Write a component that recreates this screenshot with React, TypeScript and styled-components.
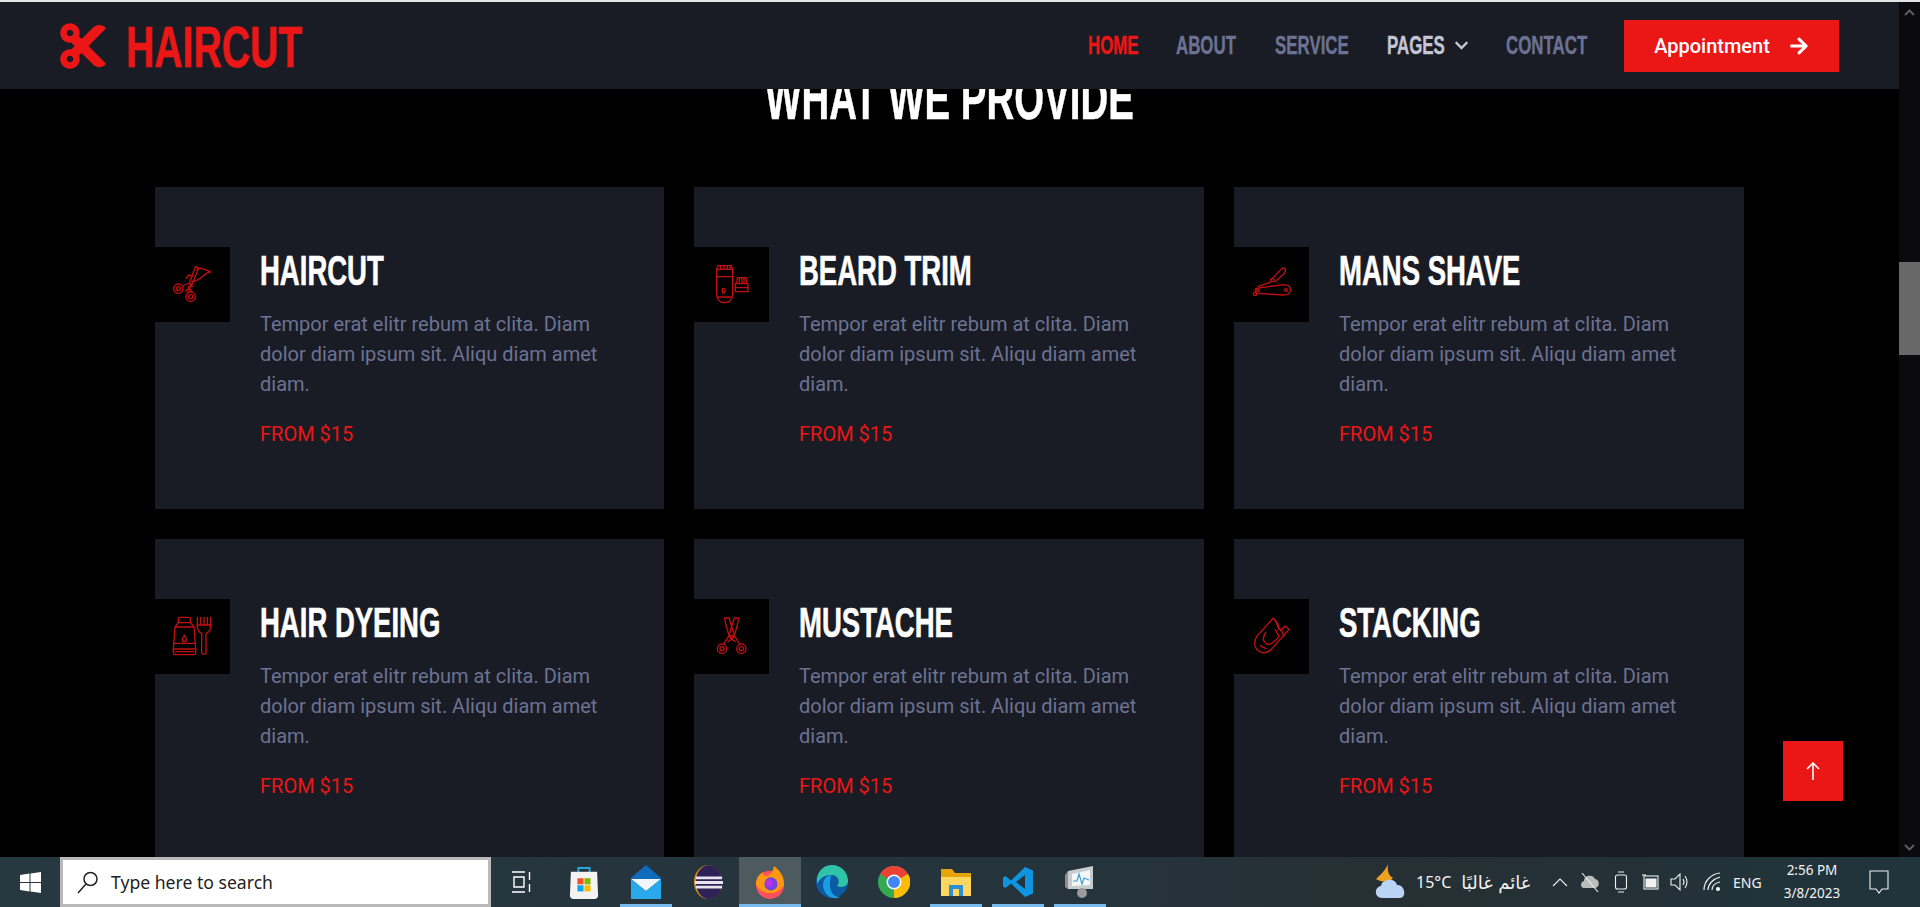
import React from "react";
import styled, { createGlobalStyle } from "styled-components";
import { FaCut, FaArrowRight, FaChevronDown } from "react-icons/fa";

const GlobalStyle = createGlobalStyle`
  html, body { margin: 0; padding: 0; background: #000; overflow: hidden; }
  * { box-sizing: border-box; }
`;

// no condensed family is installed, so the heading face is squeezed with scaleX
const head = `"Liberation Sans", Arimo, sans-serif`;
const primary = "#EB1616";
const dark = "#191C24";
const muted = "#6C7293";

const Page = styled.div`
  width: 1920px;
  height: 907px;
  display: flex;
  flex-direction: column;
  overflow: hidden;
  border-top: 2px solid #e3e3e3;
  background: #000;
`;
const Middle = styled.div`
  flex: 1;
  min-height: 0;
  display: flex;
  position: relative;
`;
const Site = styled.div`
  flex: 1;
  min-width: 0;
  display: flex;
  flex-direction: column;
  overflow: hidden;
`;
const Navbar = styled.nav`
  flex: none;
  height: 87px;
  background: ${dark};
  display: flex;
  align-items: center;
  padding: 0 60px 0 57px;
  position: relative;
  z-index: 2;
`;
const Brand = styled.div`
  width: 260px;
  display: flex;
  align-items: center;
  gap: 17px;
  color: ${primary};
`;
const BrandName = styled.span`
  display: inline-block;
  width: 176px;
  margin-top: 3px;
  font: 700 58px/1 ${head};
  white-space: nowrap;
  transform: scaleX(0.675);
  transform-origin: left center;
  -webkit-text-stroke: 0.6px ${primary};
`;
const NavLinks = styled.div`
  margin-left: auto;
  display: flex;
  align-items: center;
`;
const NavLink = styled.a<{ $color: string; $w: number }>`
  width: ${(p) => p.$w}px;
  color: ${(p) => p.$color};
  display: flex;
  align-items: center;
  gap: 11px;
`;
const NavLabel = styled.span<{ $w?: number }>`
  display: inline-block;
  ${(p) => (p.$w ? `width: ${p.$w}px;` : "")}
  font: 700 25px/1 ${head};
  white-space: nowrap;
  transform: scaleX(0.675);
  transform-origin: left center;
  -webkit-text-stroke: 0.4px currentColor;
`;
const Appointment = styled.button`
  width: 215px;
  height: 52px;
  margin-left: 2px;
  border: 0;
  background: ${primary};
  color: #fff;
  font: 500 20px "Roboto", sans-serif;
  display: flex;
  align-items: center;
  justify-content: center;
  gap: 19px;
`;
const Content = styled.main`
  flex: 1;
  min-height: 0;
  overflow: hidden;
`;
const Heading = styled.h1`
  margin: -21px 0 0;
  height: 119px;
  text-align: center;
  color: #fff;
  font: 700 61px/60px ${head};
  white-space: nowrap;
  transform: scaleX(0.63);
  -webkit-text-stroke: 0.5px #fff;
`;
const Grid = styled.div`
  margin-left: 155px;
  display: grid;
  grid-template-columns: 509px 510px 510px;
  gap: 30px;
`;
const Card = styled.article`
  height: 322px;
  background: ${dark};
  padding-top: 60px;
  display: flex;
  gap: 30px;
`;
const IconBox = styled.div`
  flex: none;
  width: 75px;
  height: 75px;
  background: #000;
`;
const CardBody = styled.div`
  flex: 1;
  padding-right: 45px;
`;
const CardTitle = styled.h3`
  margin: 0 0 15px;
  color: #fff;
  font: 700 42px/47px ${head};
  white-space: nowrap;
  transform: scaleX(0.655);
  transform-origin: left center;
  -webkit-text-stroke: 0.6px #fff;
`;
const CardText = styled.p`
  margin: 0 0 20px;
  color: ${muted};
  font: 400 20px/30px "Roboto", sans-serif;
`;
const Price = styled.div`
  color: ${primary};
  font: 400 20px/30px "Roboto", sans-serif;
`;
const Scrollbar = styled.div`
  flex: none;
  width: 21px;
  background: #0b0b0d;
  display: flex;
  flex-direction: column;
  align-items: center;
  justify-content: space-between;
  position: relative;
  color: #5c5c5c;
`;
const ScrollArrow = styled.div`
  height: 20px;
  display: flex;
  align-items: center;
  justify-content: center;
`;
const Thumb = styled.div`
  position: absolute;
  top: 260px;
  left: 0;
  width: 21px;
  height: 93px;
  background: #686868;
`;
const BackTop = styled.button`
  position: absolute;
  right: 77px;
  bottom: 56px;
  width: 60px;
  height: 60px;
  border: 0;
  padding: 0;
  background: ${primary};
  display: flex;
  align-items: center;
  justify-content: center;
  z-index: 3;
`;
const Taskbar = styled.footer`
  flex: none;
  height: 50px;
  background: linear-gradient(90deg, #273840 0%, #25333b 60%, #262f33 72%, #20343c 100%);
  display: flex;
  align-items: stretch;
  color: #fff;
  font-family: "Noto Sans", sans-serif;
`;
const StartCell = styled.div`
  width: 60px;
  display: flex;
  align-items: center;
  justify-content: center;
`;
const SearchBox = styled.div`
  width: 431px;
  border: 3px solid #b9b9b9;
  background: #fff;
  color: #222;
  display: flex;
  align-items: center;
  gap: 11px;
  padding-left: 13px;
  font-size: 17.6px;
`;
const TaskCell = styled.div<{ $active?: boolean; $open?: boolean }>`
  width: 62px;
  display: flex;
  align-items: center;
  justify-content: center;
  position: relative;
  background: ${(p) => (p.$active ? "#4d5a60" : "transparent")};
  &::after {
    content: "";
    display: ${(p) => (p.$active || p.$open ? "block" : "none")};
    position: absolute;
    bottom: 0;
    height: 3px;
    left: ${(p) => (p.$active ? 0 : 5)}px;
    right: ${(p) => (p.$active ? 0 : 5)}px;
    background: #76b9ed;
  }
`;
const Tray = styled.div`
  margin-left: auto;
  padding-right: 31px;
  display: flex;
  align-items: center;
`;
const TrayItem = styled.div<{ $w: number }>`
  width: ${(p) => p.$w}px;
  display: flex;
  align-items: center;
  font-size: 14px;
  color: #f2f2f2;
`;
const Weather = styled.div`
  width: 136px;
  display: flex;
  align-items: center;
  gap: 10px;
  font-size: 16px;
  color: #f2f2f2;
`;
const Arabic = styled.span`
  font: 400 18px "DejaVu Sans", sans-serif;
  white-space: nowrap;
`;
const Clock = styled.div`
  width: 87px;
  display: flex;
  flex-direction: column;
  padding-right: 27px;
  align-items: center;
  gap: 6px;
  font-size: 13.5px;
  line-height: 17px;
  color: #f2f2f2;
`;

// drawn on a 225 box so the strokes can be read off the crops
const Line = ({ children }: { children: React.ReactNode }) => (
  <svg width="75" height="75" viewBox="0 0 225 225" fill="none" stroke="#c40f0f" strokeWidth="4" strokeLinejoin="round" strokeLinecap="round">
    {children}
  </svg>
);

const ShearsIcon = () => (
  <Line>
    <circle cx="70" cy="125" r="14" /><circle cx="70" cy="125" r="6" />
    <circle cx="107" cy="149" r="14" /><circle cx="107" cy="149" r="6" />
    <path d="M83 117 L103 108 L122 58 L131 64 L110 114 L92 133" />
    <path d="M112 136 L100 118 M100 137 L107 112 L116 100" />
    <path d="M126 68 C135 58 150 68 167 75 C150 74 145 95 118 103" />
    <path d="M93 94 L101 84 L114 88 M104 112 L112 118" />
  </Line>
);
const BeardIcon = () => (
  <Line>
    <path d="M68 67 H116 V140 C116 155 108 167 91 167 C76 167 68 155 68 140 Z" />
    <path d="M68 89 H116 M73 150 H111 M68 67 L72 56 H112 L116 67 M80 57 V66 M90 57 V66 M100 57 V66 M108 57 V66" />
    <rect x="85" y="124" width="8" height="14" rx="3" />
    <path d="M124 110 H162 V134 H124 Z M124 122 H162 M128 110 L130 92 H156 L158 110 M136 93 V108 M144 93 V108 M150 93 V108" />
  </Line>
);
const ShaveIcon = () => (
  <Line>
    <path d="M113 97 L143 65 Q150 59 154 67 Q156 74 148 82 L123 104" />
    <circle cx="115" cy="99" r="5" />
    <path d="M66 124 L148 113 Q170 113 170 129 Q168 144 148 144 L70 139 Q60 134 66 124 Z" />
    <circle cx="72" cy="130" r="4" /><circle cx="156" cy="129" r="4" /><circle cx="63" cy="141" r="5" />
    <path d="M72 119 L113 104" />
  </Line>
);
const DyeIcon = () => (
  <Line>
    <path d="M70 71 V60 Q70 55 76 55 H100 Q106 55 106 60 V71 Z" />
    <path d="M70 71 L60 84 L55 150 H122 L117 84 L106 71 M60 84 H117 M58 133 H120" />
    <path d="M88 108 C84 114 82 118 82 122 A6 6 0 0 0 94 122 C94 118 92 114 88 108 Z" />
    <path d="M55 150 V160 Q55 167 62 167 H116 Q122 167 122 160 V150 M62 158 H116" />
    <path d="M127 55 V85 Q130 100 140 103 V160 Q140 166 147 166 Q153 166 153 160 V103 Q167 97 167 85 V55" />
    <path d="M137 55 V78 M147 55 V78 M157 55 V78 M127 78 H167" />
  </Line>
);
const ScissorsIcon = () => (
  <Line>
    <circle cx="84" cy="149" r="14" /><circle cx="84" cy="149" r="6" />
    <circle cx="142" cy="149" r="14" /><circle cx="142" cy="149" r="6" />
    <path d="M92 57 L105 57 L122 112 L137 135 M92 57 C94 78 102 100 108 116 L124 128" />
    <path d="M134 57 L121 57 L104 112 L89 135 M134 57 C132 78 124 100 118 116 L102 128" />
    <circle cx="113" cy="113" r="4" />
  </Line>
);
const ClipIcon = () => (
  <Line>
    <path d="M118 57 L68 112 Q54 140 73 155 Q93 170 112 151 L165 91 L153 81 L140 95 L131 75 L118 57 Z" />
    <path d="M95 100 Q80 125 98 135 Q114 140 135 112 L124 92" />
    <path d="M125 64 L134 92 M142 93 L150 112 M80 140 L88 145 M90 146 L96 149" />
  </Line>
);

const services = [
  { title: "HAIRCUT", icon: <ShearsIcon /> },
  { title: "BEARD TRIM", icon: <BeardIcon /> },
  { title: "MANS SHAVE", icon: <ShaveIcon /> },
  { title: "HAIR DYEING", icon: <DyeIcon /> },
  { title: "MUSTACHE", icon: <ScissorsIcon /> },
  { title: "STACKING", icon: <ClipIcon /> },
];

const WinLogo = () => (
  <svg width="21" height="21" viewBox="0 0 21 21" fill="#fff">
    <path d="M0 3 L9.5 1.6 V10 H0 Z M10.5 1.4 L21 0 V10 H10.5 Z M0 11 H9.5 V19.4 L0 18 Z M10.5 11 H21 V21 L10.5 19.6 Z" />
  </svg>
);
const SearchGlyph = () => (
  <svg width="24" height="24" viewBox="0 0 24 24" fill="none" stroke="#222" strokeWidth="1.5">
    <circle cx="14.5" cy="9" r="6.5" /><path d="M10 14 L2 23" />
  </svg>
);
const TaskView = () => (
  <svg width="22" height="22" viewBox="0 0 22 22" fill="none" stroke="#fff" strokeWidth="1.4">
    <path d="M1 1 H14 M1 21 H14 M3 6 H13 V16 H3 Z M18.5 1 V9 M18.5 13 V21" />
  </svg>
);
const StoreIcon = () => (
  <svg width="30" height="36" viewBox="0 0 32 36">
    <path d="M10 8 V3 H22 V8" fill="none" stroke="#29a8e0" strokeWidth="2" />
    <path d="M2 7 H30 L31 32 Q31 36 27 36 H5 Q1 36 1 32 Z" fill="#f3f3f3" />
    <rect x="9" y="14" width="6.5" height="6.5" fill="#f25022" /><rect x="16.5" y="14" width="6.5" height="6.5" fill="#7fba00" />
    <rect x="9" y="21.5" width="6.5" height="6.5" fill="#00a4ef" /><rect x="16.5" y="21.5" width="6.5" height="6.5" fill="#ffb900" />
  </svg>
);
const MailIcon = () => (
  <svg width="32" height="36" viewBox="0 0 32 36">
    <path d="M1 14 L16 1 L31 14 V34 H1 Z" fill="#0f6cbd" />
    <path d="M1 15 H31 L16 27 Z" fill="#f2f6fa" />
    <path d="M1 15 L16 27 L31 15 V35 H1 Z" fill="#29a9ec" />
  </svg>
);
const EclipseIcon = () => (
  <svg width="30" height="36" viewBox="0 0 32 36">
    <ellipse cx="16" cy="18" rx="15" ry="18" fill="#d98a1e" />
    <ellipse cx="17" cy="18" rx="14" ry="18" fill="#2c2255" />
    <path d="M3 12 H31 V15 H3 Z M2 17 H32 V20 H2 Z M3 22 H31 V25 H3 Z" fill="#e6e4ee" />
  </svg>
);
const FirefoxIcon = () => (
  <svg width="30" height="36" viewBox="0 0 32 36">
    <circle cx="16" cy="21" r="15" fill="#ff4f5e" />
    <path d="M1 21 C1 12 6 9 9 7 C8 11 10 12 13 11 C17 10 20 6 20 1 C27 6 31 12 31 21 C28 27 22 30 16 30 C8 30 4 26 1 21 Z" fill="#ff980e" />
    <circle cx="17" cy="20" r="7" fill="#7542e5" />
    <circle cx="15" cy="19" r="4" fill="#b833e1" />
  </svg>
);
const EdgeIcon = () => (
  <svg width="32" height="36" viewBox="0 0 32 36">
    <circle cx="16" cy="18" r="16" fill="#0c59a4" />
    <path d="M1 14 C3 5 9 1 16 1 C25 1 32 8 32 17 C32 23 25 24 21 22 C25 17 22 11 15 11 C9 11 4 14 1 20 Z" fill="#2fc4a7" />
    <path d="M15 11 C7 12 5 22 9 28 C12 33 18 36 24 33 C16 33 12 26 15 11 Z" fill="#1b9de2" />
  </svg>
);
const ChromeIcon = () => (
  <svg width="32" height="32" viewBox="0 0 32 32">
    <circle cx="16" cy="16" r="16" fill="#34a853" />
    <path d="M16 0 A16 16 0 0 1 30 8 L16 16 L2.2 8 A16 16 0 0 1 16 0 Z" fill="#ea4335" />
    <path d="M30 8 A16 16 0 0 1 16 32 L16 16 Z" fill="#fbbc05" />
    <circle cx="16" cy="16" r="7.5" fill="#fff" /><circle cx="16" cy="16" r="6" fill="#4285f4" />
  </svg>
);
const FolderIcon = () => (
  <svg width="32" height="30" viewBox="0 0 32 30">
    <path d="M1 2 H12 L15 6 H31 V28 H1 Z" fill="#e5a50a" />
    <path d="M1 10 H31 V29 H1 Z" fill="#ffd75e" />
    <path d="M9 18 H23 V29 H19 V22 H13 V29 H9 Z" fill="#2b8fd6" />
  </svg>
);
const VsCodeIcon = () => (
  <svg width="32" height="32" viewBox="0 0 32 32">
    <path d="M23 1 L31 4.5 V27.5 L23 31 L9 17.5 L3.5 22 L1 20.5 V11.5 L3.5 10 L9 14.5 Z M23 9 L14 16 L23 23 Z" fill="#0f95e0" fillRule="evenodd" />
  </svg>
);
const MonitorIcon = () => (
  <svg width="30" height="34" viewBox="0 0 30 34">
    <path d="M3 6 L28 1 V24 L3 24 Z" fill="#c9cccf" />
    <path d="M7 9 L25 5 V20 L7 21 Z" fill="#f4f6f7" />
    <path d="M8 16 L12 16 L14 9 L17 19 L19 13 L24 15" fill="none" stroke="#39a0d8" strokeWidth="1.2" />
    <circle cx="17" cy="28" r="5" fill="#9a9a9a" />
    <path d="M0 10 L3 6 V24 L0 22 Z" fill="#8f8f8f" />
  </svg>
);
const WeatherIcon = () => (
  <svg width="32" height="36" viewBox="0 0 32 36">
    <path d="M13 0 C10 7 6 10 1 15 C8 19 15 18 18 14 C14 12 12 7 13 0 Z" fill="#eda31f" />
    <path d="M7 34 C-1 34 -1 23 6 22 C7 15 20 13 22 21 C30 20 32 34 25 34 Z" fill="#b9d4f5" />
  </svg>
);
const TrayGlyph = ({ w, h = 22, children }: { w: number; h?: number; children: React.ReactNode }) => (
  <svg width={w} height={h} viewBox={`0 0 ${w} ${h}`} fill="none" stroke="#f0f0f0" strokeWidth="1.1">
    {children}
  </svg>
);

export default function App() {
  return (
    <Page>
      <GlobalStyle />
      <Middle>
        <Site>
          <Navbar>
            <Brand>
              <FaCut size={52} />
              <BrandName>HAIRCUT</BrandName>
            </Brand>
            <NavLinks>
              <NavLink $color={primary} $w={88}><NavLabel>HOME</NavLabel></NavLink>
              <NavLink $color={muted} $w={99}><NavLabel>ABOUT</NavLabel></NavLink>
              <NavLink $color={muted} $w={112}><NavLabel>SERVICE</NavLabel></NavLink>
              <NavLink $color="#c3c5d2" $w={119}><NavLabel $w={56}>PAGES</NavLabel><FaChevronDown size={15} /></NavLink>
              <NavLink $color={muted} $w={116}><NavLabel>CONTACT</NavLabel></NavLink>
              <Appointment>
                Appointment
                <FaArrowRight size={20} />
              </Appointment>
            </NavLinks>
          </Navbar>
          <Content>
            <Heading>WHAT WE PROVIDE</Heading>
            <Grid>
              {services.map((s) => (
                <Card key={s.title}>
                  <IconBox>{s.icon}</IconBox>
                  <CardBody>
                    <CardTitle>{s.title}</CardTitle>
                    <CardText>Tempor erat elitr rebum at clita. Diam dolor diam ipsum sit. Aliqu diam amet diam.</CardText>
                    <Price>FROM $15</Price>
                  </CardBody>
                </Card>
              ))}
            </Grid>
          </Content>
        </Site>
        <Scrollbar>
          <ScrollArrow>
            <svg width="11" height="7" viewBox="0 0 11 7" fill="none" stroke="currentColor" strokeWidth="2"><path d="M1 6 L5.5 1.5 L10 6" /></svg>
          </ScrollArrow>
          <Thumb />
          <ScrollArrow>
            <svg width="11" height="7" viewBox="0 0 11 7" fill="none" stroke="currentColor" strokeWidth="2"><path d="M1 1 L5.5 5.5 L10 1" /></svg>
          </ScrollArrow>
        </Scrollbar>
        <BackTop>
          <svg width="14" height="18" viewBox="0 0 14 18" fill="none" stroke="#fff" strokeWidth="1.6"><path d="M7 18 V1 M1 7 L7 1 L13 7" /></svg>
        </BackTop>
      </Middle>
      <Taskbar>
        <StartCell><WinLogo /></StartCell>
        <SearchBox>
          <SearchGlyph />
          Type here to search
        </SearchBox>
        <TaskCell><TaskView /></TaskCell>
        <TaskCell><StoreIcon /></TaskCell>
        <TaskCell $open><MailIcon /></TaskCell>
        <TaskCell><EclipseIcon /></TaskCell>
        <TaskCell $active><FirefoxIcon /></TaskCell>
        <TaskCell><EdgeIcon /></TaskCell>
        <TaskCell><ChromeIcon /></TaskCell>
        <TaskCell $open><FolderIcon /></TaskCell>
        <TaskCell $open><VsCodeIcon /></TaskCell>
        <TaskCell $open><MonitorIcon /></TaskCell>
        <Tray>
          <TrayItem $w={41}><WeatherIcon /></TrayItem>
          <Weather>15°C <Arabic dir="rtl">غائم غالبًا</Arabic></Weather>
          <TrayItem $w={28}><TrayGlyph w={16} h={10}><path d="M1 9 L8 2 L15 9" /></TrayGlyph></TrayItem>
          <TrayItem $w={34}><TrayGlyph w={20}><path d="M4 17 C0 17 0 11 4 10 C4 4 13 3 15 8 C20 8 20 17 15 17 Z" fill="#bcbcbc" stroke="none" /><path d="M2 2 L18 21" /></TrayGlyph></TrayItem>
          <TrayItem $w={27}><TrayGlyph w={14}><rect x="1.5" y="4" width="11" height="14" rx="2" /><path d="M4 1 H10 M4 21 H10" /></TrayGlyph></TrayItem>
          <TrayItem $w={29}><TrayGlyph w={18} h={18}><rect x="3" y="3" width="14" height="13" /><rect x="5" y="6" width="10" height="8" fill="#f0f0f0" /><path d="M1 2 H5" /></TrayGlyph></TrayItem>
          <TrayItem $w={33}><TrayGlyph w={20}><path d="M1 8 H5 L10 3 V19 L5 14 H1 Z M13 8 Q15 11 13 14 M15 5 Q19 11 15 17" /></TrayGlyph></TrayItem>
          <TrayItem $w={30}><TrayGlyph w={18}><path d="M1 19 C1 10 8 3 17 2 M5 19 C5 13 10 8 17 6 M9 19 C9 15 12 12 17 11" /><circle cx="15" cy="18" r="1.5" fill="#f0f0f0" /></TrayGlyph></TrayItem>
          <TrayItem $w={49}>ENG</TrayItem>
          <Clock><span>2:56 PM</span><span>3/8/2023</span></Clock>
          <TrayGlyph w={20} h={26}><path d="M1 2 H19 V20 H13 L10 24 L7 20 H1 Z" /></TrayGlyph>
        </Tray>
      </Taskbar>
    </Page>
  );
}
